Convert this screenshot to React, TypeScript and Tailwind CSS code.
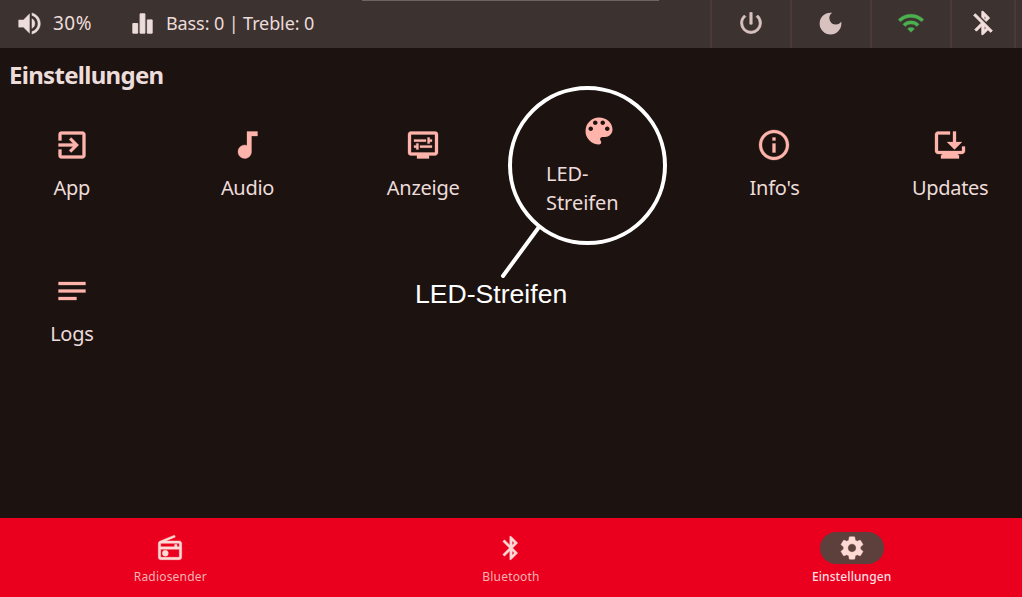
import type { IconType } from "react-icons";
import {
  MdAudiotrack,
  MdBluetooth,
  MdBluetoothDisabled,
  MdBrowserUpdated,
  MdDarkMode,
  MdDisplaySettings,
  MdEqualizer,
  MdExitToApp,
  MdInfoOutline,
  MdNotes,
  MdOutlineRadio,
  MdPowerSettingsNew,
  MdSettings,
  MdVolumeUp,
  MdWifi,
} from "react-icons/md";

type Entry = { label: string; icon: IconType; text: string };

// Palette with a solid body, cut off at the lower right
const PaletteIcon: IconType = ({ className }) => (
  <svg viewBox="0 0 24 24" fill="currentColor" className={className}>
    <path d="M12 3a9 9 0 0 0 0 18c.83 0 1.5-.67 1.5-1.5 0-.39-.15-.74-.39-1.01-.23-.26-.38-.61-.38-.99 0-.83.67-1.5 1.5-1.5H16c2.76 0 5-2.24 5-5 0-4.42-4.03-8-9-8zm-5.5 9c-.83 0-1.5-.67-1.5-1.5S5.67 9 6.5 9 8 9.67 8 10.5 7.33 12 6.5 12zm3-4C8.67 8 8 7.33 8 6.5S8.67 5 9.5 5s1.5.67 1.5 1.5S10.33 8 9.5 8zm5 0c-.83 0-1.5-.67-1.5-1.5S13.67 5 14.5 5s1.5.67 1.5 1.5S15.33 8 14.5 8zm3 4c-.83 0-1.5-.67-1.5-1.5S16.67 9 17.5 9s1.5.67 1.5 1.5-.67 1.5-1.5 1.5z" />
  </svg>
);

const entries: Entry[] = [
  { label: "App", icon: MdExitToApp, text: "tracking-[-0.2px]" },
  { label: "Audio", icon: MdAudiotrack, text: "tracking-[-0.3px]" },
  { label: "Anzeige", icon: MdDisplaySettings, text: "tracking-[-0.25px]" },
  { label: "LED-Streifen", icon: PaletteIcon, text: "tracking-[-0.05px] -ml-px" },
  { label: "Info's", icon: MdInfoOutline, text: "tracking-[-0.2px]" },
  { label: "Updates", icon: MdBrowserUpdated, text: "tracking-[-0.3px]" },
  { label: "Logs", icon: MdNotes, text: "tracking-[-0.3px]" },
];

const tabs = [
  { label: "Radiosender", icon: MdOutlineRadio, active: false },
  { label: "Bluetooth", icon: MdBluetooth, active: false },
  { label: "Einstellungen", icon: MdSettings, active: true },
];

// Material icons carry an empty 24x24 path that must not be outlined
const bold = "[&>path[fill=none]]:stroke-none";

function StatusBar() {
  const cell = "flex h-full w-20 items-center justify-center border-l-2 border-[#493a39]";
  return (
    <header className="relative flex h-12 shrink-0 items-center bg-[#3c3230] pb-0.5 text-[18px] text-[#ecdcda]">
      <div className="absolute left-[362px] top-0 h-px w-[297px] bg-[#6d6463]" />
      <div className="flex w-[128px] items-center gap-[9px] pl-[15px]">
        <MdVolumeUp className={`size-[29px] stroke-[0.3] ${bold}`} />
        <span className="text-[19px] tracking-[0.5px]">30%</span>
      </div>
      <div className="flex items-center gap-[9px]">
        <MdEqualizer className={`size-[29px] stroke-[0.8] ${bold}`} />
        <span className="whitespace-nowrap tracking-[-0.1px]">Bass: 0 | Treble: 0</span>
      </div>
      <div className="-mb-0.5 ml-auto flex h-12 text-[#d8c2bf]">
        <div className={cell}>
          <MdPowerSettingsNew className={`mb-0.5 mr-px size-7 stroke-[0.6] ${bold}`} />
        </div>
        <div className={cell}>
          <MdDarkMode className="mb-0.5 mr-px size-[29px]" />
        </div>
        <div className={cell}>
          <MdWifi className={`mb-0.5 mr-px size-7 stroke-[0.3] text-[#4caf50] ${bold}`} />
        </div>
        <div className="flex h-full w-16 items-center justify-center border-l-2 border-[#493a39] text-[#f3dfdc]">
          <MdBluetoothDisabled className={`mb-0.5 size-7 stroke-[0.8] ${bold}`} strokeLinejoin="round" />
        </div>
        <div className="w-2 border-l-2 border-[#493a39]" />
      </div>
    </header>
  );
}

function Callout() {
  return (
    <>
      <svg className="absolute left-[490px] top-[70px]" width="190" height="215" fill="none" stroke="#fff" strokeWidth="4">
        <circle cx="97.5" cy="95.5" r="77.5" />
        <path d="M49 157L13 206" strokeLinecap="round" />
      </svg>
      <span className="absolute left-[415px] top-[279px] whitespace-nowrap font-['Liberation_Sans'] text-[26.6px] leading-[30px] text-white">
        LED-Streifen
      </span>
    </>
  );
}

export default function App() {
  return (
    <div className="relative flex h-[597px] w-[1022px] flex-col overflow-hidden bg-[#1c1210] font-['Noto_Sans',sans-serif]">
      <StatusBar />

      <main className="flex-1 text-[#ecdcda]">
        <h1 className="flex h-[60px] items-center px-[9px] pb-1.5 text-[24px] font-bold tracking-[-0.7px]">Einstellungen</h1>
        <div className="grid grid-cols-6 gap-8">
          {entries.map(({ label, icon: Icon, text }) => (
            <div key={label} className="flex h-[114px] flex-col items-center justify-center gap-2.5 px-5">
              <Icon className={`size-9 shrink-0 stroke-[0.2] text-[#ffb4ab] ${bold}`} />
              <span className={`mb-px text-[20px] leading-[29px] ${text}`}>{label}</span>
            </div>
          ))}
        </div>
      </main>

      <nav className="grid h-[79px] shrink-0 grid-cols-3 bg-[#ea001e]">
        {tabs.map(({ label, icon: Icon, active }) => (
          <div key={label} className="flex flex-col items-center pt-[14px]">
            <div
              className={`flex h-8 w-16 items-center justify-center rounded-full text-[#ffdad5] ${active ? "bg-[#5d3f3b]" : ""}`}
            >
              <Icon className={`size-7 stroke-[0.4] ${bold}`} />
            </div>
            <span
              className={`mt-1 text-[12px] leading-[18px] ${active ? "font-medium tracking-[0.1px] text-[#ffdfe0]" : "tracking-[0.2px] text-[#f5b3b3]"}`}
            >
              {label}
            </span>
          </div>
        ))}
      </nav>

      <Callout />
    </div>
  );
}
